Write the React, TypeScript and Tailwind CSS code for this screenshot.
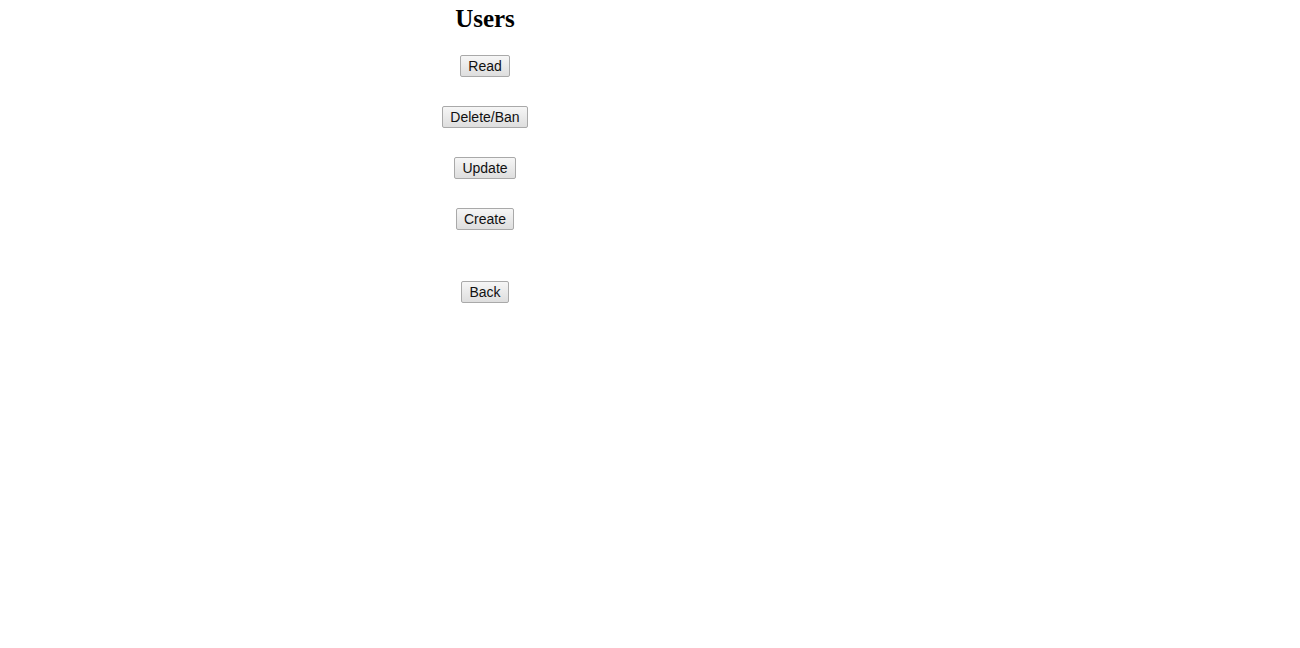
import React from 'react';

const Btn: React.FC<{ label: string }> = ({ label }) => (
  <button className="h-[22px] px-[7px] border border-[#a9a9a9] rounded-[2px] bg-gradient-to-b from-[#f6f6f6] to-[#dedede] text-[14px] leading-none text-[#111] font-['Liberation_Sans',Arial,sans-serif]">
    {label}
  </button>
);

export default function App() {
  return (
    <div className="w-[970px] bg-white pt-[5px] flex flex-col items-center">
      <h2 className="text-[25px] leading-[28px] font-bold font-['Liberation_Serif',serif] text-black">Users</h2>
      <div className="mt-[22px] flex flex-col items-center gap-[29px]">
        <Btn label="Read" />
        <Btn label="Delete/Ban" />
        <Btn label="Update" />
        <Btn label="Create" />
      </div>
      <div className="mt-[51px] flex">
        <Btn label="Back" />
      </div>
    </div>
  );
}
